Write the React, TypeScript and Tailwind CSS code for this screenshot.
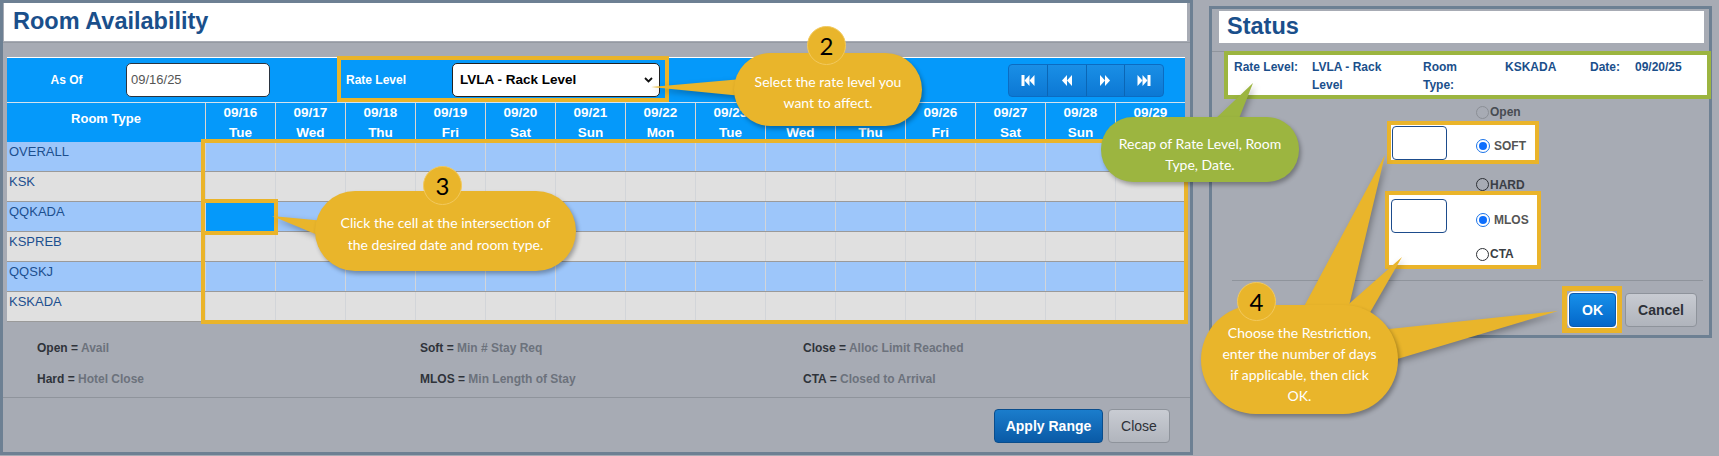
const dates = [
  ['09/16', 'Tue'], ['09/17', 'Wed'], ['09/18', 'Thu'], ['09/19', 'Fri'], ['09/20', 'Sat'],
  ['09/21', 'Sun'], ['09/22', 'Mon'], ['09/23', 'Tue'], ['09/24', 'Wed'], ['09/25', 'Thu'],
  ['09/26', 'Fri'], ['09/27', 'Sat'], ['09/28', 'Sun'], ['09/29', 'Mon'],
]

const rooms = ['OVERALL', 'KSK', 'QQKADA', 'KSPREB', 'QQSKJ', 'KSKADA']

const legend = [
  ['Open', 'Avail'], ['Soft', 'Min # Stay Req'], ['Close', 'Alloc Limit Reached'],
  ['Hard', 'Hotel Close'], ['MLOS', 'Min Length of Stay'], ['CTA', 'Closed to Arrival'],
]

function NavIcon({ kind }: { kind: 'first' | 'prev' | 'next' | 'last' }) {
  return (
    <svg width="14" height="11" viewBox="0 0 14 11" fill="white">
      {kind === 'first' && (
        <>
          <rect x="0.5" y="0" width="3" height="11" />
          <polygon points="8.5,0 3.5,5.5 8.5,11" />
          <polygon points="13.5,0 8.5,5.5 13.5,11" />
        </>
      )}
      {kind === 'prev' && (
        <>
          <polygon points="7,0 2,5.5 7,11" />
          <polygon points="12,0 7,5.5 12,11" />
        </>
      )}
      {kind === 'next' && (
        <>
          <polygon points="2,0 7,5.5 2,11" />
          <polygon points="7,0 12,5.5 7,11" />
        </>
      )}
      {kind === 'last' && (
        <>
          <polygon points="0.5,0 5.5,5.5 0.5,11" />
          <polygon points="5.5,0 10.5,5.5 5.5,11" />
          <rect x="10.5" y="0" width="3" height="11" />
        </>
      )}
    </svg>
  )
}

function Radio({ checked, light }: { checked?: boolean; light?: boolean }) {
  if (checked) {
    return (
      <span className="w-[14px] h-[14px] rounded-full border-[1.5px] border-[#1a73e8] bg-white flex items-center justify-center shrink-0">
        <span className="w-[8px] h-[8px] rounded-full bg-[#0d6efd]" />
      </span>
    )
  }
  return (
    <span
      className={`w-[13px] h-[13px] rounded-full border shrink-0 ${light ? 'border-[#8b8f96]' : 'border-[#2c2f34]'}`}
    />
  )
}

function Bubble({
  left, top, w, h, radius, color, children, pt,
}: {
  left: string; top: string; w: string; h: string; radius: string; color: string; children: React.ReactNode; pt: string
}) {
  return (
    <div
      className={`absolute ${left} ${top} ${w} ${h} ${radius} ${color} ${pt} flex items-center justify-center text-center text-white text-[14px] font-['Lato',sans-serif] shadow-[2px_3px_4px_rgba(0,0,0,0.3)]`}
    >
      {children}
    </div>
  )
}

function Num({ left, top, n }: { left: string; top: string; n: string }) {
  return (
    <div
      className={`absolute ${left} ${top} w-[39px] h-[39px] rounded-full bg-[#e9b52b] border border-[#f2c95e] flex items-center justify-center text-[24px] text-black font-['Lato',sans-serif]`}
    >
      {n}
    </div>
  )
}

export default function App() {
  return (
    <div className="relative w-[1719px] h-[456px] bg-[#a7abb4] overflow-hidden flex items-start font-['Liberation_Sans',Arial,sans-serif]">
      {/* Room Availability */}
      <div className="w-[1193px] h-[455px] shrink-0 border-[3px] border-[#6d8093] flex flex-col">
        <div className="pb-[1px] border-b border-[#959aa2]">
          <div className="ml-[1px] mr-[3px] h-[38px] bg-white flex items-center pl-[9px] text-[23.5px] font-bold text-[#1a4f8b]">
            Room Availability
          </div>
        </div>

        <div className="mt-[14px] ml-[4px] w-[1178px]">
          <div className="h-[45px] bg-[#0599fa] border-t border-white flex items-center text-white">
            <div className="w-[119px] text-center text-[12px] font-bold">As Of</div>
            <div className="w-[144px] h-[34px] bg-white rounded-[5px] border border-[#2a3440] flex items-center pl-[4px] text-[13px] text-[#555]">
              09/16/25
            </div>
            <div className="ml-[76px] w-[106px] text-[12px] font-bold">Rate Level</div>
            <div className="w-[208px] h-[34px] bg-white rounded-[5px] border border-[#222] flex items-center justify-between pl-[7px] pr-[6px] text-[13.5px] font-bold text-black">
              LVLA - Rack Level
              <svg width="9" height="6" viewBox="0 0 9 6" fill="none" stroke="#111" strokeWidth="1.8">
                <polyline points="1,1 4.5,4.5 8,1" />
              </svg>
            </div>
            <div className="ml-[348px] w-[156px] h-[33px] rounded-[4px] border border-[#0b6cc2] bg-linear-to-b from-[#1a8fe6] to-[#0c78d4] flex">
              {(['first', 'prev', 'next', 'last'] as const).map((k, i) => (
                <div
                  key={k}
                  className={`flex-1 flex items-center justify-center ${i > 0 ? 'border-l border-[#0b66b5]' : ''}`}
                >
                  <NavIcon kind={k} />
                </div>
              ))}
            </div>
          </div>

          <div className="h-[40px] flex bg-[#0599fa] border-t border-[#d4e2ee] text-white font-bold">
            <div className="w-[198px] flex items-center justify-center pb-[8px] text-[13px]">Room Type</div>
            {dates.map(([d, w]) => (
              <div key={d} className="w-[70px] border-l border-[#dcd6cf] flex flex-col items-center justify-center text-[13.5px] leading-[20px]">
                <span>{d}</span>
                <span>{w}</span>
              </div>
            ))}
          </div>

          {rooms.map((r, ri) => (
            <div
              key={r}
              className={`h-[30px] flex border-b border-[#9a9a9a] ${ri % 2 === 0 ? 'bg-[#9dc6fa]' : 'bg-[#e0e0e0]'}`}
            >
              <div className="w-[198px] pl-[2px] pt-[2px] text-[13px] leading-[16px] text-[#1c4f8f]">{r}</div>
              {dates.map(([d]) => (
                <div
                  key={d}
                  className={`w-[70px] border-l border-[#d2d5d9] ${r === 'QQKADA' && d === '09/16' ? 'bg-[#0599fa]' : ''}`}
                />
              ))}
            </div>
          ))}
        </div>

        <div className="mt-[19px] pl-[34px] grid grid-cols-[383px_383px_auto] gap-y-[17px] text-[12px] leading-[14px] font-bold">
          {legend.map(([k, v]) => (
            <div key={k}>
              <span className="text-[#2f333a]">{k} = </span>
              <span className="text-[#6c727c]">{v}</span>
            </div>
          ))}
        </div>

        <div className="mt-[11px] border-t border-[#8f949c]" />

        <div className="mt-[11px] flex justify-end gap-[5px] pr-[20px]">
          <button className="w-[109px] h-[34px] rounded-[4px] border border-[#0a4d8c] bg-linear-to-b from-[#1b7dcc] to-[#0a5aa6] text-white font-bold text-[14px]">
            Apply Range
          </button>
          <button className="w-[62px] h-[34px] rounded-[4px] border border-[#8e939b] bg-linear-to-b from-[#c9ccd3] to-[#b1b5bd] text-[#2d3138] text-[14px]">
            Close
          </button>
        </div>
      </div>

      {/* Status */}
      <div className="ml-[16px] mt-[6px] w-[503px] h-[332px] shrink-0 border-[3px] border-[#6d8093] flex flex-col">
        <div className="mt-[2px] ml-[7px] mr-[5px] h-[32px] bg-white flex items-center pl-[8px] text-[23.5px] font-bold text-[#1a4f8b]">
          Status
        </div>
        <div className="h-[9px] border-b border-[#8f949c]" />

        <div className="-mt-[1px] ml-[12px] w-[487px] h-[48px] shrink-0 border-4 border-[#9cb540] bg-white pl-[6px] pt-[3px] grid grid-cols-[78px_111px_82px_85px_45px_auto] text-[12px] leading-[18px] font-bold text-[#1b4f8b]">
          <div>Rate Level:</div>
          <div className="w-[85px]">LVLA - Rack Level</div>
          <div className="w-[45px]">Room Type:</div>
          <div>KSKADA</div>
          <div>Date:</div>
          <div>09/20/25</div>
        </div>

        <div className="mt-[6px] ml-[264px] h-[14px] flex items-center text-[12px] font-bold text-[#474b52]">
          <Radio light />
          <span className="ml-[1px]">Open</span>
        </div>

        <div className="mt-[2px] ml-[175px] w-[152px] h-[43px] shrink-0 border-4 border-[#eab42a] bg-white flex items-center">
          <div className="ml-[1px] w-[55px] h-[34px] rounded-[4px] border border-[#1d4c8c] bg-white" />
          <div className="ml-[29px] mt-[6px] flex items-center text-[12px] font-bold text-[#555]">
            <Radio checked />
            <span className="ml-[4px]">SOFT</span>
          </div>
        </div>

        <div className="mt-[14px] ml-[264px] h-[13px] flex items-center text-[12px] font-bold text-[#3a3e45]">
          <Radio />
          <span className="ml-[1px]">HARD</span>
        </div>

        <div className="ml-[173px] w-[156px] h-[78px] shrink-0 border-4 border-[#eab42a] bg-white flex items-start">
          <div className="ml-[2px] mt-[4px] w-[56px] h-[34px] rounded-[4px] border border-[#1d4c8c] bg-white" />
          <div className="ml-[29px] flex flex-col text-[12px] font-bold">
            <div className="mt-[18px] h-[14px] flex items-center text-[#555]">
              <Radio checked />
              <span className="ml-[4px]">MLOS</span>
            </div>
            <div className="mt-[20px] h-[14px] flex items-center text-[#3a3e45]">
              <Radio />
              <span className="ml-[1px]">CTA</span>
            </div>
          </div>
        </div>

        <div className="mt-[11px] ml-[20px] mr-[6px] border-t border-[#8f949c]" />

        <div className="mt-[12px] flex justify-end gap-[9px] pr-[12px]">
          <button className="w-[47px] h-[34px] rounded-[4px] border border-[#0a5ab0] bg-linear-to-b from-[#1790ea] to-[#0567c9] text-white font-bold text-[14px] shadow-[0_0_0_1.5px_white]">
            OK
          </button>
          <button className="w-[72px] h-[34px] rounded-[4px] border border-[#8e939b] bg-linear-to-b from-[#c8cbd2] to-[#b0b4bc] text-[#2d3138] font-bold text-[14px]">
            Cancel
          </button>
        </div>
      </div>

      {/* annotation frames */}
      <div className="absolute left-[337px] top-[56px] w-[332px] h-[46px] border-4 border-[#eab42a]" />
      <div className="absolute left-[201px] top-[139px] w-[987px] h-[185px] border-4 border-[#eab42a]" />
      <div className="absolute left-[201px] top-[199px] w-[77px] h-[36px] border-4 border-[#eab42a]" />
      <div className="absolute left-[1562px] top-[286px] w-[60px] h-[47px] border-[5px] border-[#eab42a]" />

      {/* callout tails */}
      <svg
        className="absolute left-0 top-0 drop-shadow-[2px_3px_3px_rgba(0,0,0,0.3)]"
        width="1719"
        height="456"
        viewBox="0 0 1719 456"
      >
        <polygon points="651,87 742,79 742,96" fill="#e9b52b" />
        <polygon points="272,216 325,221 325,238" fill="#e9b52b" />
        <polygon points="1213,121 1253,83 1238,121" fill="#9cb540" />
        <polygon points="1300,314 1385,155 1348,310" fill="#e9b52b" />
        <polygon points="1342,310 1402,257 1368,316" fill="#e9b52b" />
        <polygon points="1380,330 1558,311 1394,360" fill="#e9b52b" />
      </svg>

      <Bubble left="left-[734px]" top="top-[53px]" w="w-[188px]" h="h-[73px]" radius="rounded-[37px]" color="bg-[#e9b52b]" pt="pt-[4px] leading-[21px]">
        Select the rate level you
        <br />
        want to affect.
      </Bubble>
      <Num left="left-[807px]" top="top-[26px]" n="2" />

      <Bubble left="left-[315px]" top="top-[191px]" w="w-[261px]" h="h-[80px]" radius="rounded-[40px]" color="bg-[#e9b52b]" pt="pt-[6px] leading-[22px]">
        Click the cell at the intersection of
        <br />
        the desired date and room type.
      </Bubble>
      <Num left="left-[423px]" top="top-[166px]" n="3" />

      <Bubble left="left-[1101px]" top="top-[117px]" w="w-[198px]" h="h-[65px]" radius="rounded-[32px]" color="bg-[#9cb540]" pt="pt-[8px] leading-[21px]">
        Recap of Rate Level, Room
        <br />
        Type, Date.
      </Bubble>

      <Bubble left="left-[1201px]" top="top-[305px]" w="w-[197px]" h="h-[109px]" radius="rounded-[55px]" color="bg-[#e9b52b]" pt="pt-[8px] leading-[21px]">
        Choose the Restriction,
        <br />
        enter the number of days
        <br />
        if applicable, then click
        <br />
        OK.
      </Bubble>
      <Num left="left-[1237px]" top="top-[282px]" n="4" />
    </div>
  )
}
